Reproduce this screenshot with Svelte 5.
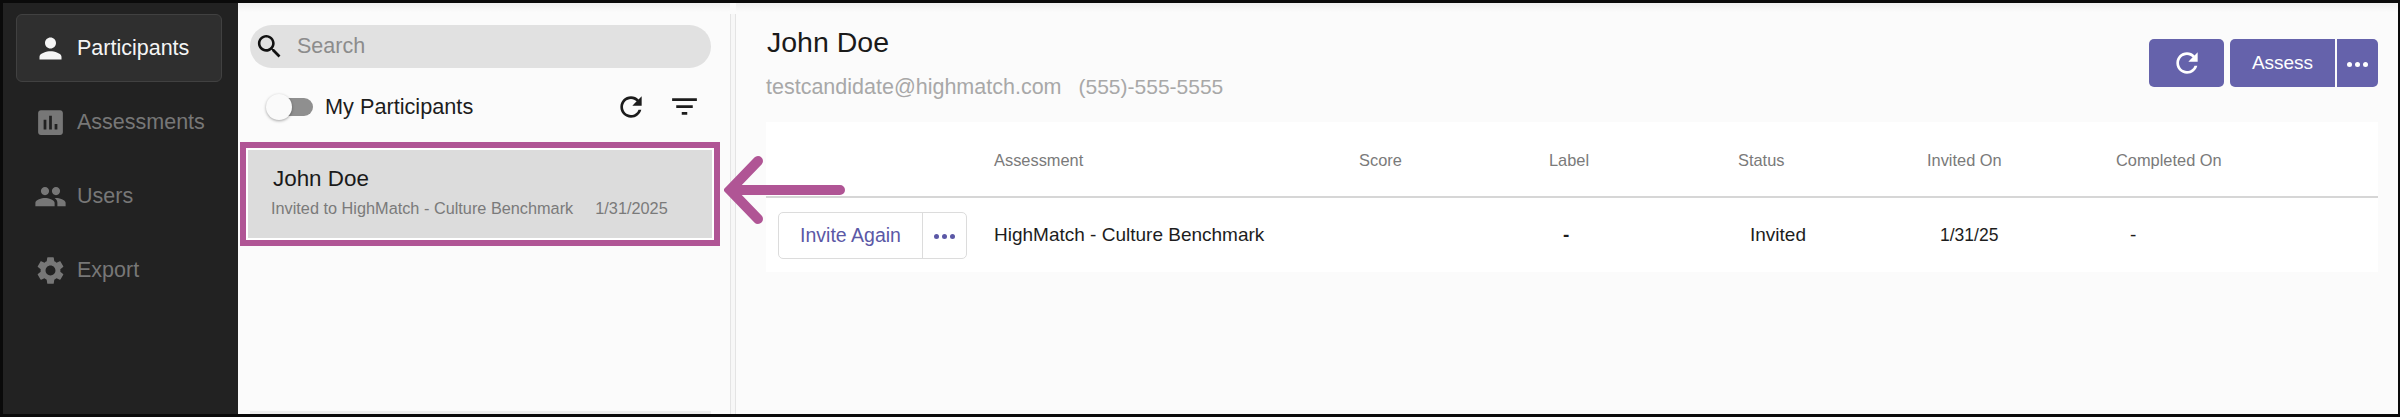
<script lang="ts">
  const nav = [
    { label: 'Participants', icon: 'person', active: true },
    { label: 'Assessments', icon: 'chart', active: false },
    { label: 'Users', icon: 'people', active: false },
    { label: 'Export', icon: 'gear', active: false }
  ]

  const paths: Record<string, string> = {
    person: 'M12 12c2.21 0 4-1.79 4-4s-1.79-4-4-4-4 1.79-4 4 1.79 4 4 4zm0 2c-2.67 0-8 1.34-8 4v2h16v-2c0-2.66-5.33-4-8-4z',
    chart: 'M19 3H5c-1.1 0-2 .9-2 2v14c0 1.1.9 2 2 2h14c1.1 0 2-.9 2-2V5c0-1.1-.9-2-2-2zM9 17H7v-7h2v7zm4 0h-2V7h2v10zm4 0h-2v-4h2v4z',
    people: 'M16 11c1.66 0 2.99-1.34 2.99-3S17.66 5 16 5c-1.66 0-3 1.34-3 3s1.34 3 3 3zm-8 0c1.66 0 2.99-1.34 2.99-3S9.66 5 8 5C6.34 5 5 6.34 5 8s1.34 3 3 3zm0 2c-2.33 0-7 1.17-7 3.5V19h14v-2.5c0-2.33-4.67-3.5-7-3.5zm8 0c-.29 0-.62.02-.97.05 1.16.84 1.97 1.97 1.97 3.45V19h6v-2.5c0-2.33-4.67-3.5-7-3.5z',
    gear: 'M19.14 12.94c.04-.3.06-.61.06-.94 0-.32-.02-.64-.07-.94l2.03-1.58c.18-.14.23-.41.12-.61l-1.92-3.32c-.12-.22-.37-.29-.59-.22l-2.39.96c-.5-.38-1.03-.7-1.62-.94l-.36-2.54c-.04-.24-.24-.41-.48-.41h-3.84c-.24 0-.43.17-.47.41l-.36 2.54c-.59.24-1.13.57-1.62.94l-2.39-.96c-.22-.08-.47 0-.59.22L2.74 8.87c-.12.21-.08.47.12.61l2.03 1.58c-.05.3-.09.63-.09.94s.02.64.07.94l-2.03 1.58c-.18.14-.23.41-.12.61l1.92 3.32c.12.22.37.29.59.22l2.39-.96c.5.38 1.03.7 1.62.94l.36 2.54c.05.24.24.41.48.41h3.84c.24 0 .44-.17.47-.41l.36-2.54c.59-.24 1.13-.56 1.62-.94l2.39.96c.22.08.47 0 .59-.22l1.92-3.32c.12-.22.07-.47-.12-.61l-2.01-1.58zM12 15.6c-1.98 0-3.6-1.62-3.6-3.6s1.62-3.6 3.6-3.6 3.6 1.62 3.6 3.6-1.62 3.6-3.6 3.6z',
    refresh: 'M17.65 6.35C16.2 4.9 14.21 4 12 4c-4.42 0-7.99 3.58-7.99 8s3.57 8 7.99 8c3.73 0 6.84-2.55 7.73-6h-2.08c-.82 2.33-3.04 4-5.65 4-3.31 0-6-2.69-6-6s2.69-6 6-6c1.66 0 3.14.69 4.22 1.78L13 11h7V4l-2.35 2.35z',
    filter: 'M10 18h4v-2h-4v2zM3 6v2h18V6H3zm3 7h12v-2H6v2z',
    search: 'M15.5 14h-.79l-.28-.27C15.41 12.59 16 11.11 16 9.5 16 5.91 13.09 3 9.5 3S3 5.91 3 9.5 5.91 16 9.5 16c1.61 0 3.09-.59 4.23-1.57l.27.28v.79l5 4.99L20.49 19l-4.99-5zm-6 0C7.01 14 5 11.99 5 9.5S7.01 5 9.5 5 14 7.01 14 9.5 11.99 14 9.5 14z'
  }

  const columns = ['', 'Assessment', 'Score', 'Label', 'Status', 'Invited On', 'Completed On']
</script>

<div class="frame">
  <aside class="sidebar">
    {#each nav as item}
      <div class="nav-item" class:active={item.active}>
        <svg class="nav-icon" viewBox="0 0 24 24" fill="currentColor"><path d={paths[item.icon]} /></svg>
        <span>{item.label}</span>
      </div>
    {/each}
  </aside>

  <section class="list-panel">
    <div class="search">
      <svg viewBox="0 0 24 24" fill="#111"><path d={paths.search} /></svg>
      <span>Search</span>
    </div>

    <div class="list-tools">
      <div class="toggle"><span class="track"></span><span class="knob"></span></div>
      <span class="my-label">My Participants</span>
      <svg class="tool-refresh" viewBox="0 0 24 24" fill="#1c1c1c"><path d={paths.refresh} /></svg>
      <svg class="tool-filter" viewBox="0 0 24 24" fill="#1c1c1c"><path d={paths.filter} /></svg>
    </div>

    <div class="highlight">
      <div class="list-item">
        <div class="item-name">John Doe</div>
        <div class="item-meta">
          <span>Invited to HighMatch - Culture Benchmark</span>
          <span>1/31/2025</span>
        </div>
      </div>
    </div>

    <div class="list-foot"></div>
  </section>

  <div class="divider"></div>

  <main class="detail">
    <header class="detail-head">
      <div>
        <h1>John Doe</h1>
        <div class="contact">
          <span>testcandidate@highmatch.com</span>
          <span class="phone">(555)-555-5555</span>
        </div>
      </div>
      <div class="actions">
        <button class="btn-primary btn-refresh" aria-label="Refresh">
          <svg viewBox="0 0 24 24" fill="#fff"><path d={paths.refresh} /></svg>
        </button>
        <div class="split">
          <button class="btn-primary btn-assess">Assess</button>
          <button class="btn-primary btn-more" aria-label="More"><i></i><i></i><i></i></button>
        </div>
      </div>
    </header>

    <div class="table">
      <div class="row head">
        {#each columns as col}
          <div>{col}</div>
        {/each}
      </div>
      <div class="row body">
        <div class="invite-cell">
          <div class="invite">
            <button class="invite-main">Invite Again</button>
            <button class="invite-more" aria-label="More"><i></i><i></i><i></i></button>
          </div>
        </div>
        <div>HighMatch - Culture Benchmark</div>
        <div></div>
        <div class="val-label">-</div>
        <div class="val-status">Invited</div>
        <div class="val-invited">1/31/25</div>
        <div class="val-completed">-</div>
      </div>
    </div>
  </main>

  <svg class="arrow" viewBox="0 0 130 76" fill="none" stroke="#b05595" stroke-width="10" stroke-linecap="round" stroke-linejoin="miter">
    <path d="M116 38H6M34 9 6 38 34 67" />
  </svg>
</div>

<style>
  :global(body) {
    margin: 0;
    background: #000;
  }

  .frame {
    position: relative;
    box-sizing: border-box;
    width: 2400px;
    height: 417px;
    display: flex;
    border: solid #0a0a0a;
    border-width: 3px 2px 3px 3px;
    background: #fbfbfb;
    font-family: "Liberation Sans", Arial, sans-serif;
    overflow: hidden;
  }

  .sidebar {
    box-sizing: border-box;
    width: 235px;
    flex-shrink: 0;
    padding: 11px 16px 0 13px;
    background: #222222;
    display: flex;
    flex-direction: column;
    gap: 6px;
  }

  .nav-item {
    box-sizing: border-box;
    height: 68px;
    display: flex;
    align-items: center;
    gap: 10px;
    padding-left: 17px;
    border: 1px solid transparent;
    border-radius: 6px;
    color: #777777;
    font-size: 21.5px;
  }

  .nav-item.active {
    background: #2f2f2f;
    border-color: #414141;
    color: #f5f5f5;
  }

  .nav-icon {
    width: 33px;
    height: 33px;
    flex-shrink: 0;
  }

  .list-panel {
    box-sizing: border-box;
    width: 492px;
    flex-shrink: 0;
    padding: 22px 0 0 2px;
    display: flex;
    flex-direction: column;
    background: linear-gradient(#efefef, #fbfbfb 9px);
  }

  .search {
    box-sizing: border-box;
    width: 461px;
    height: 43px;
    margin-left: 10px;
    display: flex;
    align-items: center;
    padding-left: 4px;
    gap: 12px;
    border-radius: 22px;
    background: #e1e1e1;
    color: #8c8c8c;
    font-size: 21.5px;
  }

  .search svg {
    width: 31px;
    height: 31px;
  }

  .list-tools {
    box-sizing: border-box;
    height: 74px;
    padding-top: 3px;
    display: flex;
    align-items: center;
    margin-left: 25px;
  }

  .toggle {
    position: relative;
    width: 48px;
    height: 28px;
    flex-shrink: 0;
  }

  .track {
    position: absolute;
    left: 12px;
    right: 0;
    top: 5px;
    height: 18px;
    border-radius: 9px;
    background: #8f8f8f;
  }

  .knob {
    position: absolute;
    left: 1px;
    top: 1px;
    width: 26px;
    height: 26px;
    border-radius: 50%;
    background: #fafafa;
    box-shadow: 0 1px 3px rgba(0, 0, 0, 0.35);
  }

  .my-label {
    margin-left: 12px;
    font-size: 21.7px;
    color: #1d1d1d;
  }

  .tool-refresh {
    width: 32px;
    height: 32px;
    margin-left: 142px;
  }

  .tool-filter {
    width: 33px;
    height: 33px;
    margin-left: 21px;
  }

  .highlight {
    box-sizing: border-box;
    width: 480px;
    height: 104px;
    border: 6px solid #b05595;
    padding: 2px;
    background: #fff;
  }

  .list-item {
    box-sizing: border-box;
    height: 100%;
    background: #dcdcdc;
    padding: 16px 0 0 25px;
  }

  .item-name {
    font-size: 22.4px;
    color: #1a1a1a;
    line-height: 26px;
  }

  .item-meta {
    margin: 7px 0 0 -2px;
    display: flex;
    gap: 22px;
    font-size: 16.3px;
    color: #7a7a7a;
  }

  .list-foot {
    margin: auto 0 0 10px;
    width: 461px;
    height: 3px;
    background: #ededed;
  }

  .divider {
    box-sizing: border-box;
    width: 6px;
    flex-shrink: 0;
    margin-top: 11px;
    border-left: 1px solid #e4e4e4;
    border-right: 1px solid #e4e4e4;
    background: #f7f7f7;
  }

  .detail {
    flex: 1;
    min-width: 0;
    box-sizing: border-box;
    padding: 0 20px 0 30px;
    background: linear-gradient(#efefef, #fbfbfb 9px);
  }

  .detail-head {
    height: 119px;
    display: flex;
    justify-content: space-between;
  }

  h1 {
    margin: 22px 0 0 1px;
    font-size: 28.5px;
    font-weight: 400;
    line-height: 34px;
    color: #1a1a1a;
  }

  .contact {
    margin-top: 16px;
    display: flex;
    gap: 17px;
    font-size: 21.5px;
    color: #a8a8a8;
  }

  .phone {
    font-size: 21px;
  }

  .actions {
    margin-top: 36px;
    display: flex;
    gap: 6px;
    height: 48px;
  }

  button {
    font-family: inherit;
    padding: 0;
    border: 0;
    cursor: pointer;
  }

  .btn-primary {
    height: 48px;
    background: #6562ab;
    color: #fff;
    display: flex;
    align-items: center;
    justify-content: center;
  }

  .btn-refresh {
    width: 75px;
    border-radius: 5px;
  }

  .btn-refresh svg {
    width: 32px;
    height: 32px;
  }

  .split {
    display: flex;
    gap: 2px;
  }

  .btn-assess {
    width: 105px;
    border-radius: 5px 0 0 5px;
    font-size: 19px;
  }

  .btn-more {
    width: 41px;
    border-radius: 0 5px 5px 0;
    gap: 2.5px;
    padding-top: 3px;
  }

  .btn-more i,
  .invite-more i {
    width: 5.5px;
    height: 5.5px;
    border-radius: 50%;
    background: #fff;
  }

  .table {
    background: #fff;
    height: 150px;
  }

  .row {
    display: grid;
    grid-template-columns: 228px 365px 190px 189px 189px 189px 1fr;
    align-items: center;
    height: 74px;
    font-size: 19px;
    color: #1d1d1d;
  }

  .row.head {
    box-sizing: content-box;
    border-bottom: 2px solid #d6d6d6;
    font-size: 16.4px;
    color: #7a7a7a;
  }

  .row.head div {
    padding-top: 2px;
  }

  .invite-cell {
    padding-left: 12px;
  }

  .invite {
    box-sizing: border-box;
    width: 189px;
    height: 47px;
    display: flex;
    border: 1px solid #dcdcdc;
    border-radius: 5px;
  }

  .invite-main {
    flex: 1;
    background: none;
    color: #5b58a6;
    font-size: 19.5px;
    border-right: 1px solid #dcdcdc;
  }

  .invite-more {
    width: 43px;
    background: none;
    display: flex;
    align-items: center;
    justify-content: center;
    gap: 2.5px;
    padding-top: 3px;
  }

  .invite-more i {
    background: #5b58a6;
  }

  .val-label {
    padding-left: 14px;
    font-weight: 700;
  }

  .val-status {
    padding-left: 12px;
  }

  .val-invited {
    padding-left: 13px;
    font-size: 17.5px;
  }

  .val-completed {
    padding-left: 14px;
  }

  .arrow {
    position: absolute;
    left: 721px;
    top: 149px;
    width: 130px;
    height: 76px;
  }
</style>
